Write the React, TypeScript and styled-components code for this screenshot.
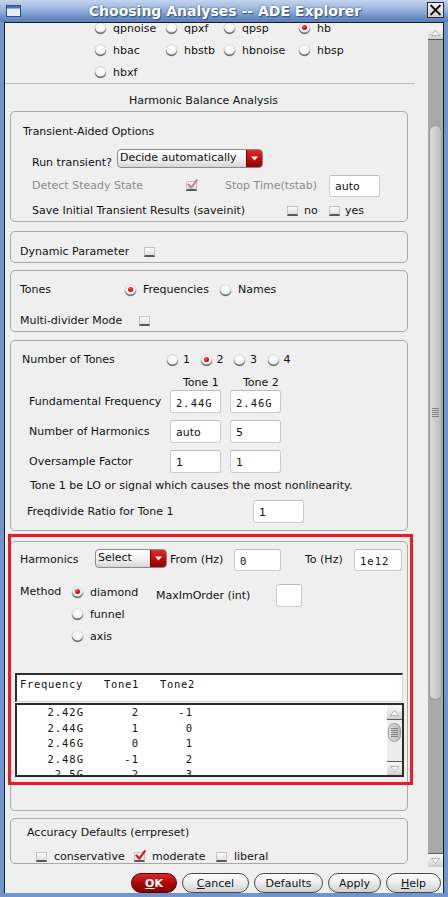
import React from "react";
import styled, { createGlobalStyle, css } from "styled-components";

const SANS = `"DejaVu Sans", Verdana, sans-serif`;
const MONO = `"DejaVu Sans Mono", "Liberation Mono", monospace`;

const GlobalStyle = createGlobalStyle`
  html, body { margin: 0; padding: 0; background: #7094cc; }
  body { font-family: ${SANS}; font-size: 11px; color: #111; }
  * { box-sizing: border-box; }
`;

const Window = styled.div`
  width: 448px;
  height: 897px;
  display: flex;
  flex-direction: column;
  background: #7094cc;
  overflow: hidden;
`;

const TitleBar = styled.div`
  height: 22px;
  flex: none;
  display: grid;
  grid-template-columns: 1fr auto 1fr;
  align-items: center;
  background: linear-gradient(#c3d4ee, #98b2dc 45%, #6f91c7 75%, #5b7fb9);
  padding: 0 4px 0 6px;
`;

const Title = styled.div`
  font-family: ${SANS};
  font-weight: bold;
  font-size: 14px;
  line-height: 22px;
  color: #ffffff;
  text-shadow: 1px 1px 1px #34527f, 0 0 2px #4a6ca0;
  white-space: nowrap;
`;

const CloseBox = styled.div`
  justify-self: end;
  width: 17px;
  height: 16px;
  margin-top: -2px;
  border: 1px solid #2a2a2a;
  background: linear-gradient(#f2f2f2, #d4d4d4);
  display: flex;
  align-items: center;
  justify-content: center;
`;

const Body = styled.div`
  flex: 1;
  min-height: 0;
  margin: 0 4px 4px 4px;
  border: 1px solid #1c1c1c;
  border-bottom: none;
  background: #efefef;
  display: flex;
  flex-direction: column;
`;

const Main = styled.div`
  flex: 1;
  min-height: 0;
  display: flex;
`;

const Viewport = styled.div`
  flex: 1;
  overflow: hidden;
`;

const Content = styled.div<{ $offset: number }>`
  margin-top: ${(p) => -p.$offset}px;
`;

const AnalysisGrid = styled.div`
  display: grid;
  grid-template-columns: 71px 58px 75px 80px;
  grid-auto-rows: 22px;
  padding-left: 90px;
`;

const Choice = styled.div<{ $w?: number; $h?: number; $gap?: number }>`
  display: flex;
  align-items: center;
  gap: ${(p) => p.$gap ?? 7}px;
  flex: none;
  white-space: nowrap;
  ${(p) => p.$w !== undefined && css`width: ${p.$w}px;`}
  ${(p) => p.$h !== undefined && css`height: ${p.$h}px;`}
`;

const Radio = styled.span<{ $on?: boolean }>`
  position: relative;
  display: inline-block;
  flex: none;
  width: 11px;
  height: 11px;
  border-radius: 50%;
  background: radial-gradient(circle at 50% 38%, #ffffff 0%, #f4f4f4 45%, #d8d8d8 78%, #b8b8b8 100%);
  box-shadow: inset 0 -1.5px 0 #6c6c6c, 0 0 0 0.5px #c4c4c4;
  ${(p) =>
    p.$on &&
    css`
      &::after {
        content: "";
        position: absolute;
        left: 3px;
        top: 2.5px;
        width: 5px;
        height: 5px;
        border-radius: 50%;
        background: radial-gradient(circle at 40% 35%, #ff5a5a, #dd0000 55%, #8e0000);
      }
    `}
`;

const Box = styled.span`
  position: relative;
  display: inline-block;
  flex: none;
  width: 11px;
  height: 10px;
  background: linear-gradient(#fcfcfc, #e0e0e0);
  border: 1px solid #c4c4c4;
  border-bottom: 2px solid #585858;
`;

const CheckMark = styled.svg`
  position: absolute;
  left: 0px;
  top: -3px;
  overflow: visible;
`;

const Checkbox = ({ checked, disabled }: { checked?: boolean; disabled?: boolean }) => (
  <Box>
    {checked && (
      <CheckMark width="11" height="11" viewBox="0 0 11 11">
        <path
          d="M1.5 5.5 L4.3 8.6 L9.8 1.2"
          fill="none"
          stroke={disabled ? "#c08a8e" : "#d8141c"}
          strokeWidth="2.2"
          strokeLinecap="round"
          strokeLinejoin="round"
        />
      </CheckMark>
    )}
  </Box>
);

const Separator = styled.div`
  height: 1px;
  background: #bdbdbd;
  margin-right: 13px;
`;

const SectionTitle = styled.div`
  margin-top: 9px;
  padding-left: 124px;
  line-height: 16px;
`;

const Group = styled.div<{ $mt: number; $pt: number; $pb: number }>`
  position: relative;
  margin: ${(p) => p.$mt}px 20px 0 5px;
  border: 1px solid #a9a9a9;
  border-radius: 5px;
  padding-top: ${(p) => p.$pt}px;
  padding-bottom: ${(p) => p.$pb}px;
`;

const Row = styled.div<{ $h: number; $mt?: number; $pl?: number; $align?: string }>`
  display: flex;
  align-items: ${(p) => p.$align ?? "center"};
  height: ${(p) => p.$h}px;
  margin-top: ${(p) => p.$mt ?? 0}px;
  padding-left: ${(p) => p.$pl ?? 0}px;
  line-height: ${(p) => p.$h}px;
  white-space: nowrap;
`;

const Label = styled.span<{
  $w?: number;
  $ml?: number;
  $mt?: number;
  $lh?: number;
  $self?: string;
  $dim?: boolean;
}>`
  flex: none;
  white-space: nowrap;
  color: ${(p) => (p.$dim ? "#8c8c8c" : "#111")};
  ${(p) => p.$w !== undefined && css`width: ${p.$w}px;`}
  margin-left: ${(p) => p.$ml ?? 0}px;
  margin-top: ${(p) => p.$mt ?? 0}px;
  ${(p) => p.$lh !== undefined && css`line-height: ${p.$lh}px;`}
  ${(p) => p.$self && css`align-self: ${p.$self};`}
`;

const Field = styled.div<{ $w: number; $h: number; $ml?: number; $mt?: number; $mono?: boolean }>`
  flex: none;
  width: ${(p) => p.$w}px;
  height: ${(p) => p.$h}px;
  margin-left: ${(p) => p.$ml ?? 0}px;
  margin-top: ${(p) => p.$mt ?? 0}px;
  background: #ffffff;
  border: 1px solid #cbcbcb;
  border-top-color: #bdbdbd;
  border-radius: 3px;
  padding: 2px 0 0 5px;
  display: flex;
  align-items: center;
  font-family: ${(p) => (p.$mono ? MONO : SANS)};
  font-size: ${(p) => (p.$mono ? "10.5px" : "11px")};
  letter-spacing: ${(p) => (p.$mono ? "1px" : "0")};
  line-height: 14px;
  color: #111;
`;

const Combo = styled.div<{ $w: number }>`
  flex: none;
  width: ${(p) => p.$w}px;
  height: 19px;
  display: flex;
  border: 1px solid #8a8a8a;
  border-radius: 4px;
  overflow: hidden;
  background: linear-gradient(#ffffff, #f0f0f0 55%, #d6d6d6);
  align-self: center;
`;

const ComboText = styled.span`
  flex: 1;
  padding-left: 2px;
  line-height: 16px;
  white-space: nowrap;
  overflow: hidden;
`;

const ComboArrow = styled.span`
  width: 16px;
  flex: none;
  display: flex;
  align-items: center;
  justify-content: center;
  background: linear-gradient(#e52a2a, #c10a0a 55%, #8c0000);
  border-left: 1px solid #7a0000;
`;

const DownTri = () => (
  <svg width="7" height="5" viewBox="0 0 7 5">
    <polygon points="0,0.5 7,0.5 3.5,4.5" fill="#ffffff" />
  </svg>
);

const ToneHead = styled.div`
  display: flex;
  gap: 9px;
  height: 14px;
  margin-top: 8px;
  padding-left: 159px;
  line-height: 14px;
`;

const ToneLabel = styled.span`
  width: 51px;
  padding-left: 13px;
  white-space: nowrap;
`;

const MethodRow = styled.div`
  display: flex;
  align-items: flex-start;
  margin-top: 10px;
  padding-left: 9px;
`;

const RadioStack = styled.div`
  display: flex;
  flex-direction: column;
  width: 84px;
  flex: none;
`;

const TableHead = styled.div`
  margin: 26px 4px 0 4px;
  height: 29px;
  background: #ffffff;
  border-top: 2px solid #303030;
  border-left: 2px solid #303030;
  border-right: 1px solid #d6d6d6;
  border-bottom: 1px solid #d6d6d6;
  padding: 2px 0 0 3px;
  font-family: ${MONO};
  font-size: 10.5px;
  letter-spacing: 0.68px;
  line-height: 14px;
  white-space: pre;
`;

const TableBody = styled.div`
  margin: 1px 3px 0 4px;
  height: 74px;
  background: #ffffff;
  border: 2px solid #2c2c2c;
  display: flex;
`;

const TableRows = styled.div`
  flex: 1;
  overflow: hidden;
`;

const TableRow = styled.div`
  display: grid;
  grid-template-columns: 67px 55px 54px;
  height: 15.5px;
  line-height: 15.5px;
  font-family: ${MONO};
  font-size: 10.5px;
  letter-spacing: 1px;
  & > span {
    text-align: right;
  }
`;

const RedMark = styled.div`
  position: absolute;
  left: -3px;
  top: -8px;
  width: 405px;
  height: 251px;
  border: 3px solid #ec1c24;
  pointer-events: none;
`;

const ScrollCol = styled.div<{ $w: number; $pt?: number; $bg?: string }>`
  width: ${(p) => p.$w}px;
  flex: none;
  display: flex;
  flex-direction: column;
  padding-top: ${(p) => p.$pt ?? 0}px;
  background: ${(p) => p.$bg ?? "#efefef"};
`;

const ScrollBtn = styled.div<{ $h: number; $down?: boolean }>`
  height: ${(p) => p.$h}px;
  flex: none;
  display: flex;
  align-items: center;
  justify-content: center;
  background: linear-gradient(#f8f8f8, #e4e4e4 55%, #cfcfcf);
  ${(p) => (p.$down ? css`border-top: 1px solid #5a5a5a;` : css`border-bottom: 1px solid #5a5a5a;`)}
`;

const Track = styled.div<{ $bg: string }>`
  flex: 1;
  display: flex;
  flex-direction: column;
  align-items: center;
  background: ${(p) => p.$bg};
`;

const Thumb = styled.div<{ $top: number; $h: number; $w: number }>`
  margin-top: ${(p) => p.$top}px;
  width: ${(p) => p.$w}px;
  height: ${(p) => p.$h}px;
  border-radius: ${(p) => p.$w / 2}px;
  background: linear-gradient(90deg, #dadada, #cbcbcb 55%, #bcbcbc);
  border: 1px solid #9c9c9c;
  display: flex;
  align-items: center;
  justify-content: center;
`;

const Grip = styled.div`
  width: 7px;
  height: 9px;
  background: repeating-linear-gradient(#858585 0 1px, transparent 1px 2px);
`;

const ScrollArrow = ({ down }: { down?: boolean }) => (
  <svg width="9" height="6" viewBox="0 0 9 6">
    <polygon
      points={down ? "0.5,0.5 8.5,0.5 4.5,5.5" : "0.5,5.5 8.5,5.5 4.5,0.5"}
      fill="#ffffff"
      stroke="#a0a0a0"
      strokeWidth="0.8"
    />
  </svg>
);

const ButtonBar = styled.div`
  height: 26px;
  flex: none;
  display: flex;
  justify-content: flex-end;
  align-items: flex-start;
  gap: 5px;
  padding: 6px 2px 0 0;
`;

const Button = styled.div<{ $w: number; $primary?: boolean }>`
  width: ${(p) => p.$w}px;
  height: 20px;
  border-radius: 10px;
  border: 1px solid #4a4a4a;
  background: linear-gradient(#ffffff, #ececec 50%, #cfcfcf);
  display: flex;
  align-items: center;
  justify-content: center;
  font-family: ${SANS};
  font-size: 11px;
  color: #111;
  ${(p) =>
    p.$primary &&
    css`
      background: linear-gradient(#d92a2a, #b20606 50%, #850000);
      border-color: #5a0000;
      color: #ffffff;
      font-weight: bold;
    `}
`;

const U = styled.span`
  text-decoration: underline;
  text-underline-offset: 1px;
`;

const analyses = ["qpnoise", "qpxf", "qpsp", "hb", "hbac", "hbstb", "hbnoise", "hbsp", "hbxf"];

const harmonics: [string, string, string][] = [
  ["2.42G", "2", "-1"],
  ["2.44G", "1", "0"],
  ["2.46G", "0", "1"],
  ["2.48G", "-1", "2"],
  ["2.5G", "-2", "3"],
];

const WindowIcon = () => (
  <svg width="15" height="12" viewBox="0 0 15 12">
    <rect x="0.5" y="0.5" width="14" height="11" fill="#e9ecef" stroke="#2d4f86" />
    <rect x="1" y="1" width="13" height="2.5" fill="#4b72ad" />
  </svg>
);

const CloseX = () => (
  <svg width="13" height="12" viewBox="0 0 13 12">
    <path d="M1.5 1 L11.5 11 M11.5 1 L1.5 11" stroke="#111" strokeWidth="1.8" />
  </svg>
);

export default function App() {
  return (
    <>
      <GlobalStyle />
      <Window>
        <TitleBar>
          <WindowIcon />
          <Title>Choosing Analyses -- ADE Explorer</Title>
          <CloseBox>
            <CloseX />
          </CloseBox>
        </TitleBar>
        <Body>
          <Main>
            <Viewport>
              <Content $offset={6}>
                <AnalysisGrid>
                  {analyses.map((name) => (
                    <Choice key={name}>
                      <Radio $on={name === "hb"} />
                      <span>{name}</span>
                    </Choice>
                  ))}
                </AnalysisGrid>
                <Separator />
                <SectionTitle>Harmonic Balance Analysis</SectionTitle>

                <Group $mt={2} $pt={10} $pb={1}>
                  <Row $h={20} $pl={12}>
                    Transient-Aided Options
                  </Row>
                  <Row $h={24} $mt={4} $pl={21}>
                    <Label $w={85} $self="flex-end" $lh={14}>
                      Run transient?
                    </Label>
                    <Combo $w={146}>
                      <ComboText>Decide automatically</ComboText>
                      <ComboArrow>
                        <DownTri />
                      </ComboArrow>
                    </Combo>
                  </Row>
                  <Row $h={22} $mt={5} $pl={21}>
                    <Label $w={154} $dim>
                      Detect Steady State
                    </Label>
                    <Checkbox checked disabled />
                    <Label $w={104} $ml={28} $dim>
                      Stop Time(tstab)
                    </Label>
                    <Field $w={51} $h={22}>
                      auto
                    </Field>
                  </Row>
                  <Row $h={18} $mt={5} $pl={21}>
                    <Label $w={255}>Save Initial Transient Results (saveinit)</Label>
                    <Checkbox />
                    <Label $w={25} $ml={6}>
                      no
                    </Label>
                    <Checkbox />
                    <Label $ml={5}>yes</Label>
                  </Row>
                </Group>

                <Group $mt={9} $pt={12} $pb={2}>
                  <Row $h={16} $pl={9}>
                    <Label $w={124}>Dynamic Parameter</Label>
                    <Checkbox />
                  </Row>
                </Group>

                <Group $mt={7} $pt={11} $pb={2}>
                  <Row $h={16} $pl={9}>
                    <Label $w={105}>Tones</Label>
                    <Choice $w={95}>
                      <Radio $on />
                      <span>Frequencies</span>
                    </Choice>
                    <Choice>
                      <Radio />
                      <span>Names</span>
                    </Choice>
                  </Row>
                  <Row $h={16} $mt={15} $pl={9}>
                    <Label $w={119}>Multi-divider Mode</Label>
                    <Checkbox />
                  </Row>
                </Group>

                <Group $mt={8} $pt={11} $pb={7}>
                  <Row $h={16} $pl={11}>
                    <Label $w={145}>Number of Tones</Label>
                    {["1", "2", "3", "4"].map((n) => (
                      <Choice key={n} $w={33.5} $gap={5}>
                        <Radio $on={n === "2"} />
                        <span>{n}</span>
                      </Choice>
                    ))}
                  </Row>
                  <ToneHead>
                    <ToneLabel>Tone 1</ToneLabel>
                    <ToneLabel>Tone 2</ToneLabel>
                  </ToneHead>
                  <Row $h={23} $pl={18}>
                    <Label $w={141}>Fundamental Frequency</Label>
                    <Field $w={51} $h={23} $mono>
                      2.44G
                    </Field>
                    <Field $w={51} $h={23} $ml={9} $mono>
                      2.46G
                    </Field>
                  </Row>
                  <Row $h={23} $mt={7} $pl={18}>
                    <Label $w={141}>Number of Harmonics</Label>
                    <Field $w={51} $h={23}>
                      auto
                    </Field>
                    <Field $w={51} $h={23} $ml={9}>
                      5
                    </Field>
                  </Row>
                  <Row $h={23} $mt={7} $pl={18}>
                    <Label $w={141}>Oversample Factor</Label>
                    <Field $w={51} $h={23}>
                      1
                    </Field>
                    <Field $w={51} $h={23} $ml={9}>
                      1
                    </Field>
                  </Row>
                  <Row $h={16} $mt={5} $pl={19}>
                    Tone 1 be LO or signal which causes the most nonlinearity.
                  </Row>
                  <Row $h={23} $mt={6} $pl={16}>
                    <Label $w={226}>Freqdivide Ratio for Tone 1</Label>
                    <Field $w={51} $h={23}>
                      1
                    </Field>
                  </Row>
                </Group>

                <Group $mt={10} $pt={3} $pb={33}>
                  <Row $h={26} $pl={9} $align="flex-start">
                    <Label $w={75} $lh={14} $mt={8}>
                      Harmonics
                    </Label>
                    <Combo $w={72}>
                      <ComboText>Select</ComboText>
                      <ComboArrow>
                        <DownTri />
                      </ComboArrow>
                    </Combo>
                    <Label $w={64} $ml={3} $lh={14} $mt={8}>
                      From (Hz)
                    </Label>
                    <Field $w={47} $h={22} $mt={4} $mono>
                      0
                    </Field>
                    <Label $w={49} $ml={24} $lh={14} $mt={8}>
                      To (Hz)
                    </Label>
                    <Field $w={48} $h={22} $mt={4} $mono>
                      1e12
                    </Field>
                  </Row>
                  <MethodRow>
                    <Label $w={52} $lh={22}>
                      Method
                    </Label>
                    <RadioStack>
                      {["diamond", "funnel", "axis"].map((m) => (
                        <Choice key={m} $h={22}>
                          <Radio $on={m === "diamond"} />
                          <span>{m}</span>
                        </Choice>
                      ))}
                    </RadioStack>
                    <Label $w={120} $lh={16} $mt={7}>
                      MaxImOrder (int)
                    </Label>
                    <Field $w={26} $h={23} $mt={3} />
                  </MethodRow>
                  <TableHead>{"Frequency   Tone1   Tone2"}</TableHead>
                  <TableBody>
                    <TableRows>
                      {harmonics.map(([f, a, b]) => (
                        <TableRow key={f}>
                          <span>{f}</span>
                          <span>{a}</span>
                          <span>{b}</span>
                        </TableRow>
                      ))}
                    </TableRows>
                    <ScrollCol $w={15} $pt={1}>
                      <ScrollBtn $h={14}>
                        <ScrollArrow />
                      </ScrollBtn>
                      <Track $bg="#ececec">
                        <Thumb $top={3} $h={19} $w={13}>
                          <Grip />
                        </Thumb>
                      </Track>
                      <ScrollBtn $h={14} $down>
                        <ScrollArrow down />
                      </ScrollBtn>
                    </ScrollCol>
                  </TableBody>
                  <RedMark />
                </Group>

                <Group $mt={7} $pt={6} $pb={0}>
                  <Row $h={16} $pl={16}>
                    Accuracy Defaults (errpreset)
                  </Row>
                  <Row $h={13} $mt={9} $pl={25}>
                    <Choice $w={98}>
                      <Checkbox />
                      <span>conservative</span>
                    </Choice>
                    <Choice $w={82}>
                      <Checkbox checked />
                      <span>moderate</span>
                    </Choice>
                    <Choice>
                      <Checkbox />
                      <span>liberal</span>
                    </Choice>
                  </Row>
                </Group>
              </Content>
            </Viewport>
            <ScrollCol $w={15} $pt={4}>
              <ScrollBtn $h={13}>
                <ScrollArrow />
              </ScrollBtn>
              <Track $bg="#a9a9a9">
                <Thumb $top={85} $h={575} $w={13}>
                  <Grip />
                </Thumb>
              </Track>
              <ScrollBtn $h={14} $down>
                <ScrollArrow down />
              </ScrollBtn>
            </ScrollCol>
          </Main>
          <ButtonBar>
            <Button $w={46} $primary>
              <U>O</U>K
            </Button>
            <Button $w={67}>
              <U>C</U>ancel
            </Button>
            <Button $w={69}>Defaults</Button>
            <Button $w={53}>Apply</Button>
            <Button $w={55}>
              <U>H</U>elp
            </Button>
          </ButtonBar>
        </Body>
      </Window>
    </>
  );
}
